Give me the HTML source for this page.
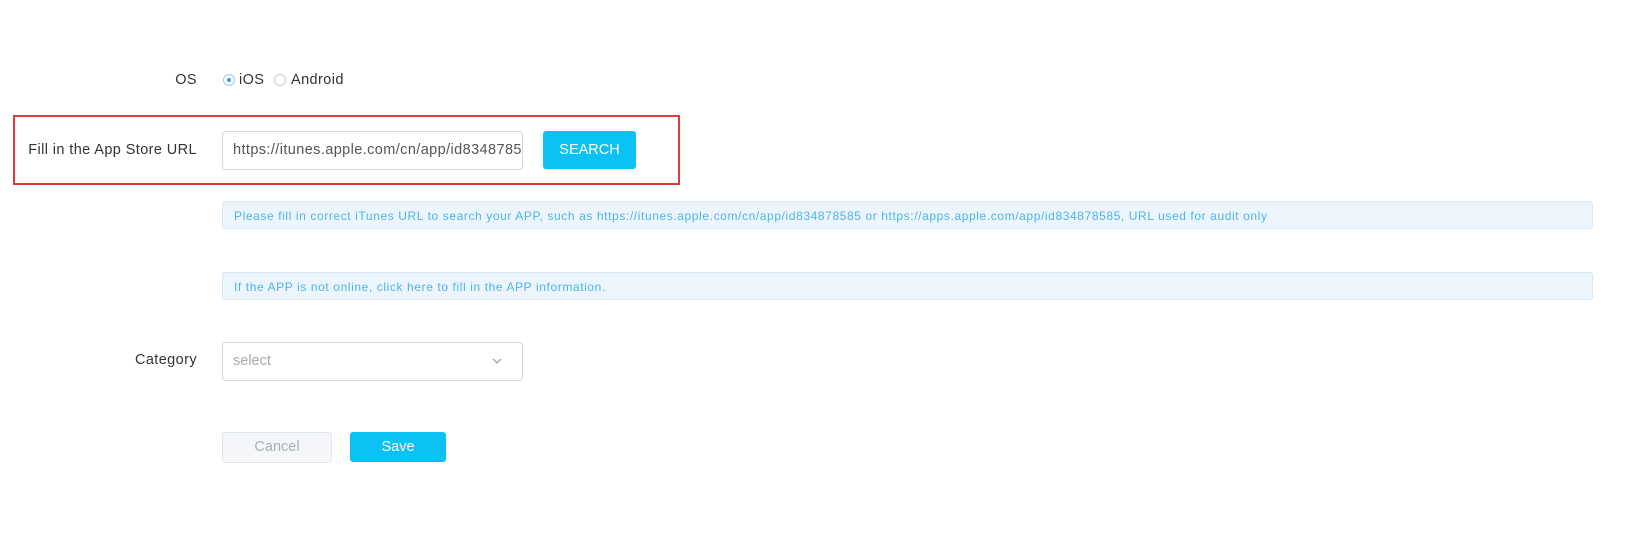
<!DOCTYPE html>
<html><head><style>
body{margin:0;width:1634px;height:533px;background:#fff;font-family:"Liberation Sans",sans-serif;position:relative;overflow:hidden}
.a{position:absolute}
.lbl{font-size:14.5px;color:#333;text-align:right;width:197px;left:0;letter-spacing:0.4px}
.info{left:222px;width:1371px;height:28px;background:#ecf5fc;border:1px solid #d8e9f6;border-radius:3px;color:#4db5e8;font-size:12px;line-height:28px;padding-left:11px;box-sizing:border-box;letter-spacing:0.6px;white-space:nowrap}
</style></head><body>
<div class="a lbl" style="top:72px">OS</div>
<div class="a" style="left:223px;top:74px;width:12px;height:12px;border:1px solid #9ccaf0;border-radius:50%;box-sizing:border-box"><div style="width:4px;height:4px;background:#3d9ae8;border-radius:50%;margin:3px"></div></div>
<div class="a" style="left:239px;top:72px;font-size:14.5px;color:#333;letter-spacing:0.4px">iOS</div>
<div class="a" style="left:274px;top:74px;width:12px;height:12px;border:1px solid #ccc;border-radius:50%;box-sizing:border-box"></div>
<div class="a" style="left:291px;top:72px;font-size:14.5px;color:#333;letter-spacing:0.4px">Android</div>
<div class="a" style="left:13px;top:115px;width:667px;height:70px;border:2px solid #e03a3a;box-sizing:border-box"></div>
<div class="a lbl" style="top:142px">Fill in the App Store URL</div>
<div class="a" style="left:222px;top:131px;width:301px;height:39px;border:1px solid #d6d6d6;border-radius:4px;box-sizing:border-box;font-size:14.5px;color:#555;line-height:37px;padding-left:10px;overflow:hidden;white-space:nowrap;letter-spacing:0.4px">https://itunes.apple.com/cn/app/id8348785</div>
<div class="a" style="left:543px;top:131px;width:93px;height:38px;background:#0cc2f5;border-radius:3px;color:#fff;font-size:14.5px;line-height:38px;text-align:center">SEARCH</div>
<div class="a info" style="top:201px">Please fill in correct iTunes URL to search your APP, such as https://itunes.apple.com/cn/app/id834878585 or https://apps.apple.com/app/id834878585, URL used for audit only</div>
<div class="a info" style="top:272px">If the APP is not online, click here to fill in the APP information.</div>
<div class="a lbl" style="top:352px">Category</div>
<div class="a" style="left:222px;top:342px;width:301px;height:39px;border:1px solid #d6d6d6;border-radius:4px;box-sizing:border-box;font-size:14.5px;color:#aaa;line-height:37px;padding-left:10px">select
<svg style="position:absolute;right:20px;top:15px" width="10" height="6"><path d="M1 1L5 5L9 1" stroke="#999" fill="none" stroke-width="1.2"/></svg></div>
<div class="a" style="left:222px;top:432px;width:110px;height:31px;background:#f4f6f9;border:1px solid #e2e5ea;border-radius:3px;box-sizing:border-box;color:#aab0b8;font-size:14.5px;line-height:29px;text-align:center">Cancel</div>
<div class="a" style="left:350px;top:432px;width:96px;height:30px;background:#0cc2f5;border-radius:3px;color:#fff;font-size:14.5px;line-height:30px;text-align:center">Save</div>
</body></html>
